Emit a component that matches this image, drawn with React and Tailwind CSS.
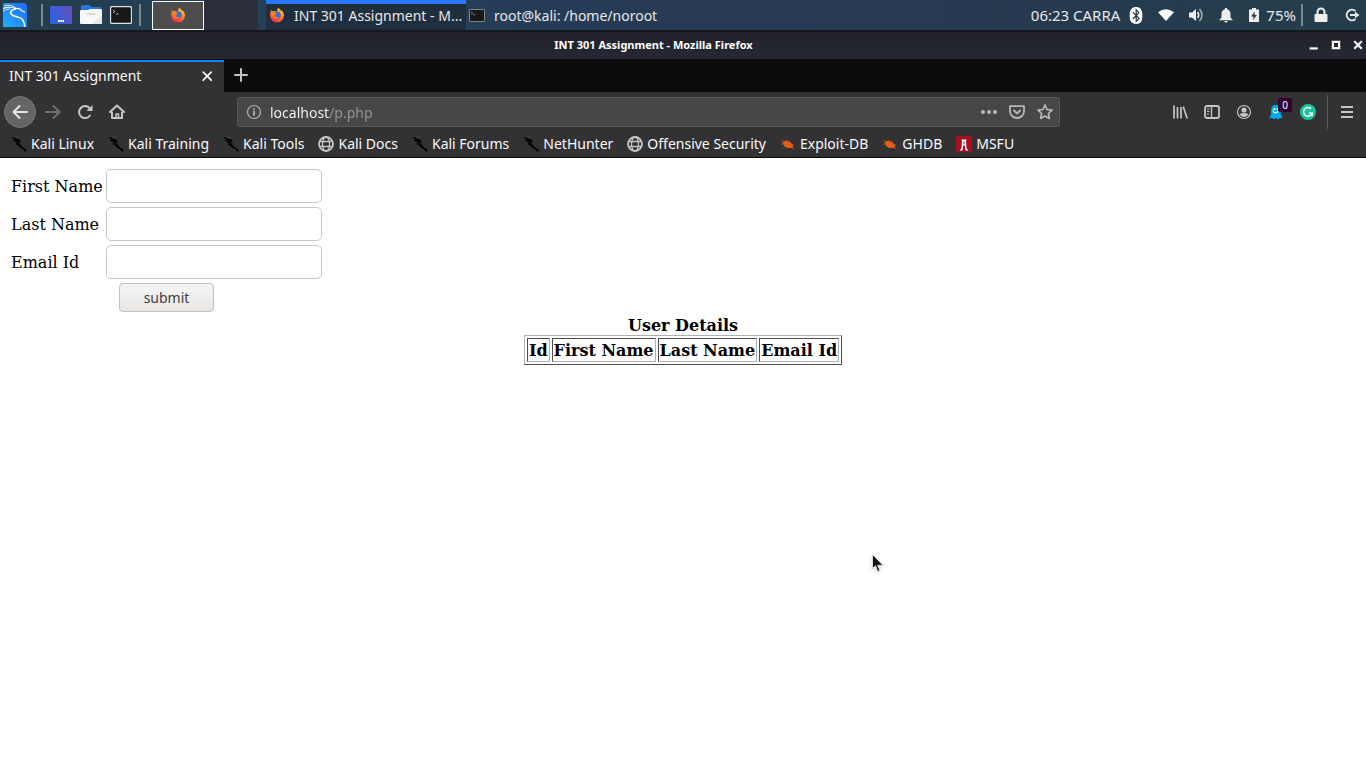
import { FaBluetooth } from 'react-icons/fa';

function KaliLogo() {
  return (
    <svg width="24" height="24" viewBox="0 0 24 24">
      <defs>
        <linearGradient id="kali" x1="0" y1="1" x2="1" y2="0">
          <stop offset="0" stopColor="#1fb0ff" />
          <stop offset="1" stopColor="#2268f5" />
        </linearGradient>
      </defs>
      <path d="M0 0h22l2 2v22H0z" fill="url(#kali)" />
      <g fill="none" stroke="#fff" strokeLinecap="round">
        <path d="M2 2.500c4-.8 8 0 11 2.500" strokeWidth="0.900" />
        <path d="M0 5.500c5-2 9-1.500 13 .3" strokeWidth="1.200" />
        <path d="M0 8.500c2-2 4-2.500 7-2.500" strokeWidth="0.800" />
        <path d="M13 5.500c2.500-.3 4.500.5 5.500 2l3 1.500" strokeWidth="1.200" />
        <path d="M12.500 6C8.500 6.500 6.500 9 8.500 11.500c2.500 3 8 1.500 11 5 1.500 2 2 4 2.200 7" strokeWidth="1.500" />
      </g>
    </svg>
  );
}

function DesktopIcon() {
  return (
    <svg width="22" height="18" viewBox="0 0 22 18">
      <defs>
        <linearGradient id="desk" x1="0" y1="0.300" x2="1" y2="0">
          <stop offset="0" stopColor="#2f62d9" />
          <stop offset="1" stopColor="#6a4fc0" />
        </linearGradient>
      </defs>
      <rect width="22" height="18" rx="1" fill="url(#desk)" />
      <path d="M8 14h1.700v2H8zM10.200 14h1.600v2h-1.600zM12.300 14H14v2h-1.700z" fill="#fff" />
    </svg>
  );
}

function FolderIcon() {
  return (
    <svg width="22" height="20" viewBox="0 0 22 20">
      <path d="M1 1.500Q1 0 2.500 0h7l2 2H20q1 0 1 1v4H1z" fill="#2a72e8" />
      <path d="M0 6q0-1 1-1h7l2-1h11q1 0 1 1v13q0 1-1 1H1q-1 0-1-1z" fill="#f8f8f8" />
      <path d="M22 10v8q0 1-1 1H12z" fill="#e6e6e6" />
      <path d="M6.500 9h9" stroke="#bbb" />
    </svg>
  );
}

function TerminalIcon({ small }) {
  return (
    <svg width={small ? 16 : 22} height={small ? 13 : 18} viewBox="0 0 22 18" className="shrink-0">
      <rect x="0.500" y="0.500" width="21" height="17" rx="1.500" fill="#161819" stroke={small ? '#9c9c9c' : '#dedede'} strokeWidth="1.300" />
      <path d="M3 4l2 1.500L3 7M6 8h2.500" stroke="#b8b8b8" fill="none" strokeWidth="1" />
    </svg>
  );
}

function FirefoxIcon() {
  return (
    <svg width="16" height="16" viewBox="0 0 16 16" className="shrink-0">
      <defs>
        <linearGradient id="fox" x1="0.800" y1="0" x2="0.300" y2="1">
          <stop offset="0" stopColor="#ffd83a" />
          <stop offset="0.450" stopColor="#ff8a1e" />
          <stop offset="1" stopColor="#f0254f" />
        </linearGradient>
      </defs>
      <path d="M9 1c2 1 2.500 2 3 3l.5-.7C14.300 4.800 15 6.500 15 8.500A6.800 6.800 0 0 1 8 15.300 6.800 6.800 0 0 1 1 8.500C1 6 2 4 2.800 2.800l.6 1.800C4 4 4.700 3.800 5.500 3.900 6.500 4 8 4.500 8.500 4.500 8 3 8.300 2 9 1z" fill="url(#fox)" />
      <circle cx="8.300" cy="8" r="3.400" fill="#4468dc" />
      <path d="M3.300 6c2-.8 3 .3 4.500.4-.5 1.500-2 1-2.300 2 .3 1.700 2.500 2 4 1.100-.7 2-2.500 2.700-4.200 1.800C3.500 10.500 2.800 8 3.300 6z" fill="#ff7a20" />
    </svg>
  );
}

function WifiIcon() {
  return (
    <svg width="16" height="12" viewBox="0 0 16 12">
      <path d="M0 3.200Q8-2.700 16 3.200L8 12z" fill="#fff" />
    </svg>
  );
}

function VolumeIcon() {
  return (
    <svg width="16" height="16" viewBox="0 0 16 16" fill="none" stroke="#eee" strokeWidth="1.500">
      <path d="M1 5.500h3L8 2v12l-4-3.500H1z" fill="#eee" stroke="none" />
      <path d="M9.700 5q2 3 0 6" />
      <path d="M11.500 2Q16.500 8 11.500 14" stroke="#aab4bd" />
    </svg>
  );
}

function BellIcon() {
  return (
    <svg width="14" height="16" viewBox="0 0 14 16" fill="#eee">
      <path d="M7 1c.8 0 1.200.5 1.200 1.200C10.500 2.800 11.500 4.500 11.500 7v3.500L14 13.200H0l2.500-2.700V7c0-2.500 1-4.200 3.300-4.800C5.800 1.500 6.200 1 7 1zM5.300 14h3.400Q8.500 15.500 7 15.500T5.300 14z" />
    </svg>
  );
}

function BatteryIcon() {
  return (
    <svg width="10" height="14" viewBox="0 0 10 14">
      <path d="M3 0h4v1.500h3V14H0V1.500h3z" fill="#eee" />
      <path d="M5.800 3.500L2 8.500h2.500L4 12l4-5H5.500z" fill="#263c4d" />
    </svg>
  );
}

function LockIcon() {
  return (
    <svg width="14" height="16" viewBox="0 0 14 16">
      <rect x="0.500" y="7" width="13" height="8" rx="1" fill="#eee" />
      <path d="M3.500 8V5a3.500 3.500 0 0 1 7 0v3" fill="none" stroke="#eee" strokeWidth="2" />
    </svg>
  );
}

function LogoutIcon() {
  return (
    <svg width="16" height="16" viewBox="0 0 16 16" fill="none" stroke="#e4e6e8" strokeWidth="2">
      <path d="M11.500 4A5.300 5.300 0 1 0 11.500 12" />
      <path d="M6 8h6" />
      <path d="M11 4.500L15.500 8 11 11.500z" fill="#e4e6e8" stroke="none" />
    </svg>
  );
}

function Icon({ children, size = 16, className = '' }) {
  return (
    <svg width={size} height={size} viewBox="0 0 16 16" fill="none" stroke="currentColor" strokeWidth="2" strokeLinecap="round" strokeLinejoin="round" className={className}>
      {children}
    </svg>
  );
}

function DragonIcon() {
  return (
    <svg width="16" height="16" viewBox="0 0 16 16" fill="#050505">
      <path d="M0 1l4 .5L8 3l1.500 1.500L9 6l2 3.500 1.500 2.300 2.500 1.200.8 2.500-2.300-.3-1-1.800L9.500 12 7 9.500 4.800 8.500 5.500 6.500 1.500 4.500 3.500 4z" />
      <path d="M3.500 1l4.500 1.300M7.500 6l4.500 4.500" stroke="#6b6b6b" strokeWidth="0.500" />
    </svg>
  );
}

function GlobeIcon() {
  return (
    <svg width="16" height="16" viewBox="0 0 16 16" fill="none" stroke="#c4c4c6" strokeWidth="1.300">
      <circle cx="8" cy="8" r="7" strokeWidth="1.800" />
      <ellipse cx="8" cy="8" rx="3.500" ry="7" />
      <path d="M1 5.500h14M1 10.500h14" />
    </svg>
  );
}

function BugIcon() {
  return (
    <svg width="16" height="16" viewBox="0 0 16 16">
      <path d="M3.500 5.500C6 4 10 5.500 12 8c1 1.500 1.500 2.800 1 3.600-2.500 1-6 .4-8-1.400S2.500 6.500 3.500 5.500z" fill="#e95e14" />
      <path d="M1.500 4.500l3 1.800M1 8h4M3.500 11l2.500-1M6 3.500l1.500 2M9 4.500l1.200 1.500M12 9l2-.3M7 10.500l-.5 1.500M11 11l3 2" stroke="#e95e14" strokeWidth="0.700" />
    </svg>
  );
}

function MsfuIcon() {
  return (
    <svg width="16" height="16" viewBox="0 0 16 16">
      <rect width="16" height="16" fill="#a80d20" />
      <path d="M5.500 3.500h5v1.200H10l.5 7.300 1.800 2.500H9.500L8.700 9.500H7.300l-.8 5H3.700L5.500 12 6 4.700h-.5z" fill="#fff" />
      <path d="M7.500 5.500h1v3h-1z" fill="#a80d20" />
    </svg>
  );
}

function GhostIcon() {
  return (
    <svg width="14" height="16" viewBox="0 0 14 16">
      <path d="M7 1C3.500 1 2.200 3.500 2.200 6v4L.5 14.500l2.500-.7 1.500 1.400L7 14l2.500 1.200 1.500-1.400 2.500.7L11.800 10V6C11.800 3.500 10.500 1 7 1z" fill="#00aef0" />
      <path d="M4 6.500q1.500 5 6 0" stroke="#fff" fill="none" strokeWidth="1.200" />
      <circle cx="5.500" cy="5" r="1" fill="#fff" />
      <circle cx="8.700" cy="5" r="1" fill="#fff" />
    </svg>
  );
}

const bookmarks = [
  ['Kali Linux', DragonIcon],
  ['Kali Training', DragonIcon],
  ['Kali Tools', DragonIcon],
  ['Kali Docs', GlobeIcon],
  ['Kali Forums', DragonIcon],
  ['NetHunter', DragonIcon],
  ['Offensive Security', GlobeIcon],
  ['Exploit-DB', BugIcon],
  ['GHDB', BugIcon],
  ['MSFU', MsfuIcon],
];

const fields = [
  ['First Name', 'first'],
  ['Last Name', 'last'],
  ['Email Id', 'email'],
];

function Divider() {
  return <span className="h-[22px] w-[2px] bg-[#7e8790]" />;
}

function Panel() {
  return (
    <header className="flex h-8 items-center justify-between border-b-2 border-[#14191f] bg-[linear-gradient(to_right,#253d4b,#24405a_20%,#273a54_50%,#253a4f_80%,#243f4b)] text-[15px] text-[#e6e8ea]">
      <div className="flex h-full items-center">
        <button aria-label="Applications" className="ml-[3px] mr-[14px]"><KaliLogo /></button>
        <Divider />
        <div className="mx-[7px] flex items-center gap-2">
          <button aria-label="Show desktop"><DesktopIcon /></button>
          <button aria-label="Files"><FolderIcon /></button>
          <button aria-label="Terminal"><TerminalIcon /></button>
        </div>
        <Divider />
        <button aria-label="Workspace 1" className="ml-[11px] flex h-[29px] w-[52px] items-center justify-center border border-white bg-[#4d4d4d]"><FirefoxIcon /></button>
        <button aria-label="Workspace 2" className="h-full w-[54px] bg-[#2b2e3b]" />
        <button className="ml-2 flex h-full w-[200px] items-center gap-[9px] whitespace-nowrap border-t-4 border-[#2777ff] bg-[#202f3e] pb-1 pl-[3px] text-[14px]">
          <FirefoxIcon />
          <span>INT 301 Assignment - M...</span>
        </button>
        <button className="flex h-full items-center gap-[9px] whitespace-nowrap pl-[3px] text-[14px]">
          <TerminalIcon small />
          <span>root@kali: /home/noroot</span>
        </button>
      </div>
      <div className="flex items-center pr-[6px]">
        <span className="mr-2 whitespace-nowrap">06:23 CARRA</span>
        <button aria-label="Bluetooth" className="mr-[14px] flex w-4 justify-center"><FaBluetooth size={17} color="#fff" /></button>
        <button aria-label="Network" className="mr-[14px]"><WifiIcon /></button>
        <button aria-label="Volume" className="mr-[15px]"><VolumeIcon /></button>
        <button aria-label="Notifications" className="mr-4"><BellIcon /></button>
        <button className="mr-[5px] flex items-center gap-[7px]"><BatteryIcon />75%</button>
        <Divider />
        <button aria-label="Lock" className="ml-[11px] mr-4"><LockIcon /></button>
        <button aria-label="Log out"><LogoutIcon /></button>
      </div>
    </header>
  );
}

function TitleBar() {
  return (
    <div className="flex h-[27px] items-center bg-[linear-gradient(#20212b,#262832)] pb-px text-white">
      <h1 className="flex-1 text-center text-[11px] font-bold leading-4">INT 301 Assignment - Mozilla Firefox</h1>
      <div className="flex w-[59px] items-center justify-end gap-3 pr-[3px]">
        <button aria-label="Minimize"><Icon size={10}><path d="M1 13.500h13" strokeWidth="3.500" strokeLinecap="butt" /></Icon></button>
        <button aria-label="Maximize"><Icon size={10}><path d="M3 3h10v10H3z" strokeWidth="3.500" strokeLinejoin="miter" /></Icon></button>
        <button aria-label="Close"><Icon size={10}><path d="M2 2l12 12M14 2L2 14" strokeWidth="3.500" strokeLinecap="butt" /></Icon></button>
      </div>
    </div>
  );
}

function TabBar() {
  return (
    <div className="flex h-[33px] bg-[#0c0c0d] pt-px">
      <div className="flex w-[224px] items-center justify-between border-t-2 border-[#0a84ff] bg-[#323234] pb-[3px] pl-[9px] pr-[9px] text-[14px] text-[#f9f9fa]">
        <span>INT 301 Assignment</span>
        <button aria-label="Close tab"><Icon><path d="M4.200 4.200l8 8M12.200 4.200l-8 8" strokeWidth="1.800" /></Icon></button>
      </div>
      <button aria-label="New tab" className="mb-[2px] ml-[9px] text-[#c4c4c6]"><Icon><path d="M8 2v12M2 8h12" /></Icon></button>
    </div>
  );
}

function NavBar() {
  const btn = 'flex h-8 w-8 items-center justify-center';
  return (
    <div className="flex h-10 items-center pl-1 pr-[3px] text-[#c6c6c8]">
      <button aria-label="Back" className="flex h-8 w-8 items-center justify-center rounded-full border border-[#777] bg-[#656567] text-[#e4e4e6]"><Icon><path d="M15 8H1.500M7.500 2L1.500 8l6 6" /></Icon></button>
      <button aria-label="Forward" className={btn + ' ml-px text-[#717173]'}><Icon><path d="M1 8h13.500M8.500 2l6 6-6 6" /></Icon></button>
      <button aria-label="Reload" className={btn}><Icon><path d="M13 11.500A6 6 0 1 1 12.500 4" /><path d="M15.500 1v6h-6z" fill="currentColor" stroke="none" /></Icon></button>
      <button aria-label="Home" className={btn}><Icon><path d="M1 8l7-6.500L15 8M3 8.500V14h10V8.500" /><path d="M7 14v-4h2.500v4" strokeWidth="1.500" /></Icon></button>
      <div className="mx-[104px] flex h-[30px] flex-1 items-center rounded-[3px] border border-[#59595b] bg-[#474749] pl-2 pr-[6px]">
        <Icon className="text-[#b1b1b3]"><circle cx="8" cy="8" r="6.500" strokeWidth="1.200" /><path d="M8 7.500V11M8 4.800v.1" strokeWidth="1.800" /></Icon>
        <input aria-label="Address" defaultValue="localhost/p.php" className="ml-2 min-w-0 flex-1 bg-[linear-gradient(to_right,#f9f9fa_60px,#98989b_60px)] bg-clip-text text-[14px] text-transparent caret-white outline-none" />
        <div className="flex gap-3 text-[#b8b8ba]">
          <button aria-label="Page actions"><Icon><circle cx="2" cy="8" r="2" fill="currentColor" stroke="none" /><circle cx="8" cy="8" r="2" fill="currentColor" stroke="none" /><circle cx="14" cy="8" r="2" fill="currentColor" stroke="none" /></Icon></button>
          <button aria-label="Save to Pocket"><Icon><path d="M1 2.200h14v5a7 6.800 0 0 1-14 0zM5 6.500l3 3 3-3" strokeWidth="1.800" /></Icon></button>
          <button aria-label="Bookmark this page"><Icon><path d="M8 1l2.100 4.500 4.900.6-3.600 3.400.9 4.900L8 12l-4.300 2.400.9-4.900L1 6.100l4.900-.6z" strokeWidth="1.700" /></Icon></button>
        </div>
      </div>
      <button aria-label="Library" className={btn}><Icon><path d="M2 1.500v13M5.500 3v11.500M9 3v11.500M11.200 2.500l4 12" strokeLinecap="butt" strokeWidth="1.700" /></Icon></button>
      <button aria-label="Sidebars" className={btn}><Icon><rect x="1" y="2" width="14" height="12" rx="2" strokeWidth="1.800" /><path d="M7.500 2v12" strokeWidth="1.300" /><path d="M3 5h2.500M3 7.500h2.500M3 10h2" strokeWidth="1" strokeLinecap="butt" /></Icon></button>
      <button aria-label="Account" className={btn}><Icon><circle cx="8" cy="8" r="6.500" strokeWidth="1.200" /><circle cx="8" cy="6" r="2.600" fill="currentColor" stroke="none" /><path d="M3.500 10q4.500-2 9 0Q11 13 8 13t-4.500-3z" fill="currentColor" stroke="none" /></Icon></button>
      <button aria-label="Ghostery" className={btn + ' relative'}>
        <GhostIcon />
        <span className="absolute right-0 top-[2px] flex h-[14px] w-[14px] items-center justify-center rounded-[2px] bg-[#330033] text-[10px] leading-none text-white">0</span>
      </button>
      <button aria-label="Grammarly" className={btn}><Icon><circle cx="8" cy="8" r="8" fill="#15c39a" stroke="none" /><path d="M11 4.700a4.400 4.400 0 1 0 1.200 4.300H9M12.200 9l-.2 3" stroke="#fff" strokeWidth="1.600" strokeLinecap="butt" /></Icon></button>
      <span className="mx-[3px] h-[34px] w-px bg-[#59595b]" />
      <button aria-label="Menu" className={btn}><Icon><path d="M2 3h12M2 8h12M2 13h12" strokeLinecap="butt" /></Icon></button>
    </div>
  );
}

export default function App() {
  return (
    <div className="min-h-screen bg-white font-['Noto_Sans',sans-serif]">
      <Panel />
      <TitleBar />
      <TabBar />
      <div className="border-b border-[#0c0c0d] bg-[#323234]">
        <NavBar />
        <nav className="flex h-[25px] items-center gap-[14px] pb-[2px] pl-[11px] text-[14px] text-[#f9f9fa]">
          {bookmarks.map(([name, Glyph]) => (
            <a key={name} href="#" className="flex items-center gap-1 whitespace-nowrap"><Glyph />{name}</a>
          ))}
        </nav>
      </div>
      <main className="p-2 font-['DejaVu_Serif',serif] text-[16px] leading-5 text-black">
        <form onSubmit={(e) => e.preventDefault()}>
          <table className="border-separate border-spacing-[2px]">
            <tbody>
              {fields.map(([label, id]) => (
                <tr key={id}>
                  <td className="w-[93px] whitespace-nowrap pl-px pt-[2px]"><label htmlFor={id}>{label}</label></td>
                  <td className="p-px"><input id={id} type="text" className="block h-[34px] w-[216px] rounded-[5px] border border-[#cac6c2] bg-white px-2" /></td>
                </tr>
              ))}
              <tr>
                <td colSpan={2} className="p-px">
                  <button type="submit" className="mx-auto block h-[29px] w-[95px] rounded-[4px] border border-[#c3bfbb] bg-[linear-gradient(#f6f5f4,#e8e6e5)] font-['Noto_Sans',sans-serif] text-[14px] text-[#3c4043]">submit</button>
                </td>
              </tr>
            </tbody>
          </table>
        </form>
        <table className="mx-auto border-separate border-spacing-[2px] border border-b-[#4d4d4d] border-l-[#b0b0b0] border-r-[#4d4d4d] border-t-[#b0b0b0] font-bold">
          <caption className="pt-[2px] leading-[18px]">User Details</caption>
          <thead>
            <tr>
              {['Id', 'First Name', 'Last Name', 'Email Id'].map((h) => (
                <th key={h} scope="col" className="border border-b-[#b0b0b0] border-l-[#4d4d4d] border-r-[#b0b0b0] border-t-[#4d4d4d] px-px pt-[2px]">{h}</th>
              ))}
            </tr>
          </thead>
        </table>
      </main>
      <svg width="12" height="19" viewBox="0 0 12 19" className="absolute left-[872px] top-[554px] drop-shadow-sm" aria-hidden="true">
        <path d="M.5.5v14l3-2.700 2.200 5.700 2.300-1-2.300-5.200H11z" fill="#111" stroke="#ddd" />
      </svg>
    </div>
  );
}
